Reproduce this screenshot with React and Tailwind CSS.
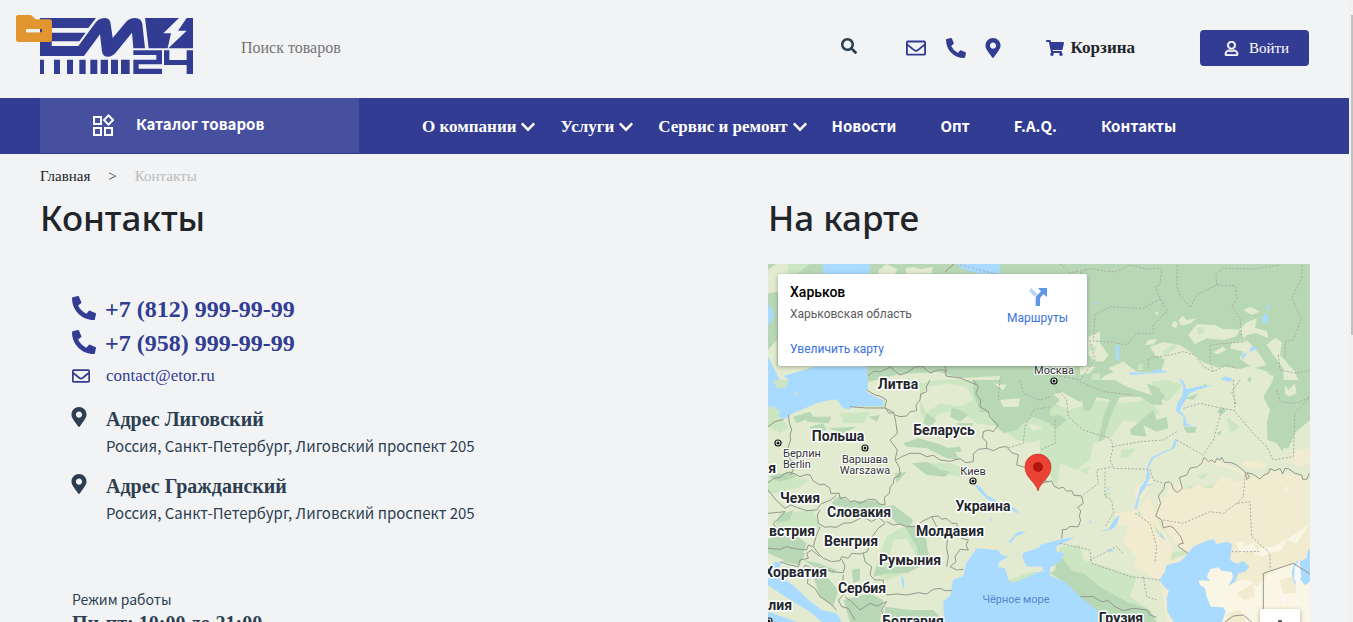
import React from "react";
import {
  FaSearch,
  FaRegEnvelope,
  FaPhoneAlt,
  FaMapMarkerAlt,
  FaShoppingCart,
  FaRegUser,
  FaChevronDown,
} from "react-icons/fa";

const SERIF = "font-['Liberation_Serif',serif]";
const SANS = "font-['Noto_Sans_CJK_SC',sans-serif]";

function Logo() {
  return (
    <svg viewBox="120 54 459 168" className="h-14 w-[153px]" fill="#323c93" aria-hidden="true">
      <path d="M120 54H288L265 84H155V98H257L238 124H155V138H235L288 66Q298 54 316 54Q330 54 332 72L338 114L378 66Q388 54 406 54Q424 54 427 72L435 145H400L396 98L347 158Q336 170 324 170Q309 170 306 155L300 103L252 168H120Z" />
      <path d="M435 54H537L490 100H513L503 145H446Z" />
      <path d="M560 54H579V145H505L560 92H534Z" />
      <path d="M400 151H486V193H416V206H486V222H400V179H469V165H400Z" />
      <path d="M492 151H508V180H560V151H579V222H560V195H492Z" />
      <path d="M120 179H132V222H120ZM162 179H180V222H162ZM201 179H219V222H201ZM238 179H257V222H238ZM271 179H292V222H271ZM302 179H324V222H302ZM333 179H354V222H333ZM363 179H389V222H363Z" />
    </svg>
  );
}

function Folder() {
  return (
    <svg viewBox="0 0 108 81" className="absolute -left-6 -top-[3px] h-[27px] w-9" aria-hidden="true">
      <path
        fill="#e1962f"
        fillRule="evenodd"
        d="M7 0H45L59 13H101Q108 13 108 20V74Q108 81 101 81H7Q0 81 0 74V7Q0 0 7 0ZM33 42Q30 42 30 45V49Q30 52 33 52H75Q78 52 78 49V45Q78 42 75 42Z"
      />
      <path fill="#f1f3f5" d="M33 42Q30 42 30 45V49Q30 52 33 52H72V42Z" />
    </svg>
  );
}

function CatalogIcon() {
  return (
    <svg viewBox="0 0 22 22" className="h-[22px] w-[22px]" fill="none" stroke="currentColor" strokeWidth="2" aria-hidden="true">
      <path d="M2 3H9V10H2ZM2 14H9V21H2ZM13 14H20V21H13ZM16.500 1.400L21 6L16.500 10.600L12 6Z" />
    </svg>
  );
}

function RouteIcon() {
  return (
    <svg viewBox="0 0 54 54" className="h-[18px] w-[18px]" aria-hidden="true">
      <path fill="#b9d2f6" d="M7 0L25 18L18 28L0 8Z" />
      <path fill="#5e97e6" d="M20 54V32Q20 26 25 21L36 10L27 0H54V27L44 18L35 28Q33 30 33 34V54Z" />
    </svg>
  );
}

const labels = [
  ["Литва", 898, 389], ["Беларусь", 944, 435], ["Польша", 838, 441], ["Чехия", 800, 503],
  ["Словакия", 859, 517], ["Украина", 983, 511], ["Молдавия", 950, 536], ["Венгрия", 851, 546],
  ["Румыния", 910, 565], ["Сербия", 862, 593], ["Болгария", 913, 626], ["Грузия", 1121, 623],
];
const cutLabels = [
  ["встрия", 815, 536], ["Хорватия", 827, 577], ["лия", 792, 610], ["я", 776, 473],
];
const cities = [
  ["Москва", 1054, 374], ["Киев", 973, 475], ["Варшава", 865, 463], ["Warszawa", 865, 474],
];
const dots = [[1054, 381], [973, 481], [865, 448], [778, 443], [769, 621]];

function MapDrawing() {
  return (
    <svg viewBox="768 264 542 420" preserveAspectRatio="xMinYMin slice" className="block h-full w-full" role="img" aria-label="Карта">
      <rect x="768" y="264" width="542" height="420" fill="#e2ebcf" />

      {/* northern forests */}
      <path fill="#b8d8b5" d="M768 264H1310V420L1296 432L1288 449L1278 445L1269 432L1271 410L1274 388L1268 372L1250 366L1230 372L1205 363L1180 350L1166 356L1160 374L1145 382L1128 378L1118 370L1104 376L1093 388L1080 402L1062 392L1044 398L1030 390L1010 404L996 396L1000 376L960 378L938 372L900 374L868 382H768Z" />
      <g transform="translate(760 190) scale(.33333)">
        <path fill="#e2ebcf" d="M24 240L48 222H84V300L24 310ZM356 240L380 222L412 238L405 252H355ZM436 235L460 230L480 238L518 230L515 250L440 252ZM24 480L50 450V528H320V560L160 575L120 600H24ZM985 440L1020 425V505L1000 490L988 470Z" />
        <path fill="#a9daff" d="M187 222H330V252H190ZM590 222H720V252L650 250L610 238ZM24 340L44 375L24 410ZM24 500L44 540L75 600H24ZM70 558L165 530H320L324 600H130Z" />
        <path fill="#cbe6c0" d="M84 222H150L110 252H84ZM440 560L480 580L525 600H470ZM720 570L780 580L820 600H760ZM1000 550H1020V600H980Z" />
      </g>
      <g transform="translate(1080 255) scale(.33333)">
        <path fill="#e2ebcf" d="M195 270L205 255L232 252L220 268ZM275 212L282 198L295 205L288 220ZM295 198L308 182L320 195L350 190L332 205L305 212ZM325 240L350 208L405 210L430 222L480 224L468 245L430 255L380 250L345 268ZM490 165L510 155L540 170L515 180ZM480 220L500 202L530 190L525 218L560 228L565 250L530 235L500 240L490 258ZM400 292L430 275L440 285L412 298ZM455 265L500 255L520 275L540 300L560 330L520 340L478 310L490 290L450 280ZM560 270L585 248L605 262L600 300L645 350L662 395L630 425L612 415L610 340L580 300ZM210 275L250 262L300 270L345 300L390 345L430 335L470 340L520 350L582 362L570 400L578 450H270L240 400L180 420L120 400L130 370L85 340L130 320L170 350L260 355L310 330L330 310L270 320L225 300ZM25 255L38 238L60 265L85 300L70 320L45 318L25 300ZM60 375L78 390L65 395ZM105 400L140 400V425L110 425ZM0 335L45 335L30 355L0 360ZM225 175L235 168L232 182Z" />
        <path fill="#cbe6c0" d="M175 330L190 325L188 345L172 346ZM215 380L260 375L310 390L265 440L230 430ZM190 420L235 450H185ZM245 290L285 265L290 275L260 300ZM25 270L50 275L45 290L25 285ZM350 220L370 215L375 232L355 240Z" />
        <path fill="#b8d8b5" d="M502 370L514 365L512 380H504ZM210 390L240 400L247 450H232ZM360 395L382 385L375 398ZM35 410L65 400L70 430L40 425Z" />
        <path fill="#a9daff" d="M107 270H117V300L119 322L108 310ZM548 185L558 172L565 192L558 207L545 202ZM556 162L574 143L567 162ZM148 352L210 354L232 342L265 352L235 354L150 360ZM484 298L502 292L488 315ZM508 292L515 274L535 280ZM422 374L435 364L460 373L450 380ZM318 402L335 400L380 392L330 412L308 450H295L312 425ZM36 143L60 142L38 148ZM295 372L306 374L315 398Z" />
      </g>

      {/* central and eastern woodland */}
      <g transform="translate(1040 380) scale(.33333)">
        <path fill="#cbe6c0" d="M0 90L40 70L90 90L180 60L240 70L330 60L360 100L310 130L250 120L215 170L160 190L150 240L110 270L60 250L50 320L0 230ZM245 210L285 205L270 230L240 235ZM120 270L150 260L140 285ZM190 340L215 335L200 360ZM560 110L600 140L570 160ZM60 500L120 495L130 540L200 560L290 590L270 650L330 690L200 700L120 650L40 575ZM390 520L440 510L445 530L380 550Z" />
        <path fill="#b8d8b5" d="M80 0H225L260 20L350 50L370 70L340 75L300 50L240 50L215 100L190 180L175 185L190 110L210 60L170 50L150 95L130 90L125 50L85 25ZM320 10L350 20L375 50L350 75ZM270 150L310 115L340 90L350 120L380 110L385 145L350 155L310 135L320 170L275 165ZM0 40L35 40L60 60L30 90L0 80ZM15 110L60 105L80 120L50 145L10 125ZM435 55L475 40L460 60ZM430 140L470 140L465 158H440ZM530 160L545 150L540 168ZM530 95L545 80L560 90L545 105ZM45 540L60 520L75 545L100 575L130 580L180 620L260 665L330 690L350 726H185L120 655L70 605L30 580L50 570Z" />
        <path fill="#b8d8b5" d="M700 0H810V50L770 110L750 160L738 175L728 215L710 190L683 180L680 130L690 90L670 50Z" />
        <path fill="#e2ebcf" d="M735 15L745 30L765 10L770 40L745 50L735 40Z" />
        <path fill="#f1ebcf" d="M760 230L775 208L810 205V250L780 262L745 245ZM605 245L660 240L680 262L640 270L610 255ZM490 238L540 245L600 270L630 295L720 270L810 300V726H380L360 600L375 550L445 520L415 500L375 445L350 405L355 350L375 310L410 330L425 295L450 270ZM225 400L290 390L330 350L360 440L400 500L390 550L360 600L330 590L280 560L290 530L250 490L265 440L225 430ZM285 320L340 295L320 340L300 360L280 350Z" />
        <path fill="#e2ebcf" d="M450 275L490 245L540 255L600 280L615 300L590 305L545 290L520 320L480 315L430 330L420 300ZM370 310L385 310L380 350L360 355Z" />
        <path fill="#cbe6c0" d="M470 285L505 280L490 298ZM480 320L520 315L515 325ZM440 315L460 318L450 330ZM340 435L355 450L372 480L350 460ZM285 400L300 395L305 408Z" />
        <path fill="#faf6e6" d="M500 570L540 560L580 580L570 615L600 600L630 600L650 620L690 575L760 550L810 580V726H550L555 690L510 680L495 640L475 605L505 600ZM590 490L615 482L605 500L640 490L650 510L600 520ZM640 520L660 505L700 500L740 475L725 510L690 520L670 530ZM740 480L810 430L770 490ZM735 325L745 318L740 332Z" />
        <path fill="#f1ebcf" d="M590 640L640 610L645 650L610 660ZM560 700L600 690L620 726H560ZM720 600L760 590L770 640L730 640Z" />
        <path fill="#a9daff" d="M445 520L460 500L500 482L520 478L530 492L560 485L576 492L570 540L592 552L610 543L628 560L615 575L595 580L585 605L565 617L580 590L575 575L545 572L535 562L510 568L500 590L510 602L475 600L480 615L495 625L500 650L512 680L550 682L557 695L545 726H402L382 695L380 655L387 632L372 620L358 600L375 575L380 555L420 545ZM0 495L30 487L62 478L107 472L72 488L48 500L50 515L74 520L60 545L35 560L10 575H0ZM0 575L38 590L75 605L120 650L170 690L185 726H0ZM430 0L440 30L470 20L520 15L465 32L440 45L420 90L435 110L440 132L465 140L430 138L430 110L408 92L412 70L428 45ZM405 177L412 180L403 205L370 220L340 235L325 265L330 290L315 325L300 345L290 388L284 385L300 325L318 300L322 260L335 232L370 215L395 205ZM182 452L205 448L225 415L240 405L230 435L215 448L190 454ZM360 455L372 472L376 480L362 470ZM198 506L225 512L210 516ZM755 580L762 552L775 540V600L765 615L760 600ZM778 545L800 535L805 505L810 515V605L795 615L778 595ZM340 312H322V318ZM205 320L208 330L200 332ZM150 420L155 430L148 428Z" />
        <path fill="#f8f9ff" d="M764 560L778 542L784 590L770 615L762 595ZM724 655L737 652L738 668L725 665Z" />
      </g>

      {/* western lands and seas */}
      <g transform="translate(760 380) scale(.33333)">
        <path fill="#cbe6c0" d="M24 80L60 85L70 120L85 140L60 160L24 140ZM240 100L330 95L310 130L250 130ZM330 50L375 60L370 85L300 80ZM480 10L540 0H870V170L810 190L770 180L720 140L650 130L600 90L540 100L500 130L480 100ZM24 300L90 290L150 300L120 320L60 340L24 340ZM500 250L570 250L630 270L600 290L520 275ZM60 400L160 390L180 440L100 480L40 450ZM340 580L360 520L380 470L430 440L480 460L520 540L480 560L380 600Z" />
        <path fill="#e2ebcf" d="M500 20L560 10L620 20L640 60L600 80L540 70L500 100L480 60ZM400 480L440 475L470 530L430 545L385 540Z" />
        <path fill="#b8d8b5" d="M640 0H870V130L820 110L790 130L770 150L730 160L700 130L690 100L660 95L640 40ZM575 85L600 90L625 105L600 125L570 110ZM590 130L640 130L625 155L600 150ZM500 100L530 120L510 140L490 130ZM430 190L475 175L530 190L580 210L600 240L560 235L500 205L440 200ZM550 205L600 200L605 215L560 220ZM455 250L500 245L540 270L570 275L555 290L500 285ZM405 280L440 275L410 310ZM100 110L150 95L160 110L110 130ZM140 110L215 110L205 130L140 125ZM150 140L190 130L200 150L155 155ZM325 110L360 105L350 125ZM205 145L290 140L250 160ZM24 290L55 282L95 275L110 290L60 305ZM220 360L240 348L270 365L350 360L370 380L400 375L460 420L450 440L410 430L380 395L310 395L250 380L215 375ZM24 480L50 440L100 460L140 490L130 520L70 540L24 520ZM60 405L100 390L90 420L50 430ZM60 500L110 515L135 520L120 555L70 545ZM435 440L470 435L500 480L505 540L480 560L470 500ZM340 590L350 560L400 565L440 550L480 560L440 580L380 580ZM130 540L175 550L230 570L220 580L160 560ZM160 590L200 590L235 630L220 680L180 650ZM275 570L300 565L300 600L280 610ZM375 680L450 690L520 690L540 710L480 726H370ZM250 660L330 640L370 660L360 726H270Z" />
        <path fill="#e2ebcf" d="M720 60L780 55L775 80L730 80ZM700 10L740 15L730 30ZM800 130L850 140L820 155Z" />
        <path fill="#a9daff" d="M24 0H325L318 35L345 50L365 58L372 78L320 78L275 80L270 88L250 85L228 58L200 62L170 70L95 102L72 118L55 108L60 92L40 80H24ZM552 726L550 665L572 645L578 600L610 588L618 550L640 520L650 505L715 510L725 525L745 530L718 548L715 560L735 565L748 605L785 590L810 578L855 575L848 560L800 560L785 540L790 518L870 492V726ZM24 560L48 545L65 550L55 565L65 590L110 625L145 660L185 690L230 700L245 726H185L150 695L100 665L60 640L24 615ZM24 695L110 726H24ZM640 310L660 320L680 345L715 365L765 385L778 402L755 390L710 371L680 356L655 330ZM745 485L775 455L800 455L765 470L752 490ZM425 580L432 600V630L425 610ZM690 410L694 420L690 425Z" />
        <path fill="#cbe6c0" d="M40 0H85L80 22L50 25ZM100 38L112 35L110 48ZM745 605L760 585L800 578L830 580L765 607Z" />
        <path fill="#e2ebcf" d="M715 560L718 545L745 530L785 528L800 560L848 560L850 572L810 576L750 600L735 565Z" />
        <path fill="#f3e6c8" d="M560 580L570 575L568 600L560 605ZM650 498L720 500L700 510Z" />
      </g>

      {/* state borders */}
      <g fill="none" stroke="#93978d" strokeWidth="3" strokeLinejoin="round" transform="translate(760 380) scale(.33333)">
        <path d="M85 105L88 128L95 150L90 165L92 180L85 200V230L94 242L92 260L100 270L90 285M24 308L42 295L60 292L75 280L90 276L105 282L120 290L138 284L150 285L160 303L180 315L192 312L210 325L212 340L238 340L240 355L258 352L270 365L285 362L300 370L325 358L345 358L358 372L375 375L373 352L388 340L390 322L400 310L402 295L420 285L418 262L405 240L412 210L390 180L412 160L408 130L402 100L385 98L375 80L380 60L360 48L345 45L320 30M270 80L320 84L375 84L402 98M24 330L50 362L75 385L92 375L110 382L140 392L170 390L182 372L212 360L230 345M180 390L172 405L175 430L195 442L210 440L230 442L250 430L275 428L310 410L335 425L355 412L375 428M24 400L75 395L62 410L40 430L60 470M405 105L420 110L440 108L450 95L470 92L468 75L480 60L482 42L500 35V18L510 0M640 0L655 20L648 40L662 60L660 80L685 95L690 112L715 135L700 155L685 150L670 155L668 175L680 185L680 205L655 208L640 222L640 245L618 248L600 236L570 244L540 240L520 226L500 230L480 220L450 220L425 230L408 240M680 205L700 212L720 202L740 200L755 218L775 225L770 255L795 262L810 270L812 290L830 310L850 302L870 305M380 425L400 435L420 432L440 440L470 440L485 425L515 410L535 408L545 418L560 415L575 430L590 430L595 452L605 475L625 480L618 495L625 510L600 508L585 530L588 545L570 560L590 570L610 568M515 410L530 440L550 450L562 480L560 505L565 530L560 560M340 465L355 445L375 430M340 465L330 490L322 515L300 522L275 520L265 535L245 530L240 542L215 545L190 535L175 520L160 500L168 470L180 440M160 500L145 495L140 510L120 508L100 505L80 500L60 508L24 505M60 545L90 555L115 560L120 540L145 535L140 520L155 510L180 530M135 555L160 568L190 562L215 575L250 578L255 558L245 538M135 555L128 575L145 590L142 610L165 625L180 650L210 670L230 690M250 585L248 610L258 625L255 640L235 660L245 680L265 685L285 720M310 520L315 545L335 560L330 585L345 600L370 600L370 620L380 645L410 642L440 645L475 638L500 642L520 628L540 625L555 632L575 632M255 650L275 665L300 690L330 670L350 678L380 665L365 690L375 726M24 140L45 125L70 118" />
      </g>
      <g fill="none" stroke="#93978d" strokeWidth="3" strokeLinejoin="round" transform="translate(1040 380) scale(.33333)">
        <path d="M0 310L35 303L42 318L55 325L70 322L80 334L95 332L102 346L125 348L130 370L113 382L122 392L118 410L122 420L115 440H88L80 448H68L65 475M445 520L415 500L418 492L430 490L422 470L402 445L390 438L370 444L365 420L347 408L362 370L355 348L372 325L375 308L388 305L395 312L400 328L412 338L427 325L418 292L440 285L450 265L472 260L485 250L492 232L505 245L515 240L525 248L530 235L540 240L545 232L553 247L575 248L590 255L615 275L620 298L628 292L620 278L640 283L660 297L672 285L685 280L690 266L705 272L720 265L728 282L735 265L745 266L765 280L785 285L788 298L800 298L808 280M670 726V580L760 550L810 582M122 650L160 650L185 665L205 662L225 680L250 692L280 685L320 690L330 705L350 712M555 726L580 708L610 705L635 726" />
      </g>
      <path fill="none" stroke="#93978d" d="M868 376L874 371L880 372L890 367L900 375L908 372L915 367L922 366L930 373L938 370L945 370L946 376L960 378L970 382L977 385M945 272L954 264M945 366L947 372" />

      {/* regional borders */}
      <g fill="none" stroke="#aaa9a5" strokeWidth="3" strokeDasharray="6 5">
        <path transform="translate(1080 255) scale(.33333)" d="M0 55L30 40L70 48L110 50L150 30L200 42L245 40L240 90L225 95L240 130L262 168L220 210V235L170 235L140 270L100 262L40 258L45 180L90 155L130 158L190 160L240 132M292 30L290 90L300 120L332 158L350 120L410 90L465 92L470 130L455 155L480 190L485 240L495 260L390 270V320L400 350L440 330L470 340M410 90L408 60L425 40L520 42L600 30M667 30L665 70L635 130L665 190L640 255L615 260V305M205 340V310L270 300L310 290L345 300L370 335L400 350M595 300L600 345L650 355L690 345M590 405L600 440L650 445L690 425M480 375L455 410L470 450M0 380L50 400L70 410L160 420" />
        <path transform="translate(1040 380) scale(.33333)" d="M30 0L80 60L85 110L130 150L210 175L220 200L210 240L220 260L170 270L175 310L130 345M215 200L300 185L370 180L410 155M410 180L490 225L520 180L545 90M430 85L480 70L545 85L580 90L640 160L680 200L700 240L760 230L765 100L810 50M580 0L585 90M220 265L330 268L340 300L370 310M195 275V350L215 360L220 400L195 440M370 420L430 430L510 395L550 400L590 370L630 365L635 470L690 520V570M615 285L610 350L590 370M285 400L330 430L350 500L345 550M60 490L150 510L155 550L270 590L360 600M150 540L230 500L250 520M310 590L320 650L350 660M575 515L660 515M45 120V190L0 210" />
        <path transform="translate(760 380) scale(.33333)" d="M780 0L790 40L840 60L870 50M870 80L820 90L795 140L790 190L740 205M720 0L715 60" />
      </g>
      <path fill="none" stroke="#aaa9a5" strokeDasharray="2 2" d="M960 265L1000 275M1060 264L1070 273L1087 269M1090 340L1095 360L1080 380L1040 372" />

      <g className="font-[Roboto,sans-serif] text-[14px] font-bold" fill="#23262d" stroke="#fff" strokeWidth="3" strokeLinejoin="round" paintOrder="stroke" textAnchor="middle">
        {labels.map(([t, x, y]) => <text key={t} x={x} y={y}>{t}</text>)}
      </g>
      <g className="font-[Roboto,sans-serif] text-[14px] font-bold" fill="#23262d" stroke="#fff" strokeWidth="3" strokeLinejoin="round" paintOrder="stroke" textAnchor="end">
        {cutLabels.map(([t, x, y]) => <text key={t} x={x} y={y}>{t}</text>)}
      </g>
      <g className="font-[Roboto,sans-serif] text-[11px]" fill="#333" stroke="#fff" strokeWidth="2" strokeLinejoin="round" paintOrder="stroke" textAnchor="middle">
        {cities.map(([t, x, y]) => <text key={t} x={x} y={y}>{t}</text>)}
        <text x="783" y="457" textAnchor="start">Берлин</text>
        <text x="783" y="468" textAnchor="start">Berlin</text>
      </g>
      <text x="1016" y="603" textAnchor="middle" fill="#5b86cc" className="font-[Roboto,sans-serif] text-[11px]">Чёрное море</text>
      {dots.map(([x, y]) => (
        <g key={`${x}-${y}`}>
          <circle cx={x} cy={y} r="3" fill="#fff" stroke="#111" strokeWidth="1.2" />
          <circle cx={x} cy={y} r="1.5" fill="#111" />
        </g>
      ))}
      <path fill="#ea4335" stroke="#c5221f" strokeWidth=".6" d="M1038 491C1036 482 1025 478 1025 467A13 13 0 0 1 1051 467C1051 478 1040 482 1038 491Z" />
      <circle cx="1038" cy="467" r="5" fill="#b31412" />
    </svg>
  );
}

function MapPanel() {
  return (
    <div className="relative mt-6 h-[420px] overflow-hidden">
      <MapDrawing />
      <div className="absolute left-[10px] top-[10px] flex h-[92px] w-[309px] justify-between rounded-xs bg-white pl-3 pr-[19px] font-[Roboto,sans-serif] text-xs shadow-[0_1px_4px_rgba(0,0,0,0.3)]">
        <div className="flex flex-col pt-2">
          <strong className="text-sm leading-5 font-medium text-black">Харьков</strong>
          <span className="mt-1 leading-4 text-[#5b5b5b]">Харьковская область</span>
          <a href="#map" className="mt-[19px] leading-4 text-[#3a72e0]">Увеличить карту</a>
        </div>
        <a href="#route" className="flex flex-col items-center gap-1 pt-[14px] leading-4 text-[#3a72e0]">
          <RouteIcon />
          Маршруты
        </a>
      </div>
      <button type="button" aria-label="Увеличить масштаб" className="absolute right-[10px] top-[345px] flex h-10 w-10 items-center justify-center rounded-xs bg-white shadow-[0_1px_4px_rgba(0,0,0,0.3)]">
        <svg viewBox="0 0 18 18" className="h-[18px] w-[18px]" stroke="#666" strokeWidth="4" aria-hidden="true"><path d="M9 0V18M0 9H18" /></svg>
      </button>
    </div>
  );
}

function Header() {
  return (
    <header className="flex h-[98px] items-center px-10 pb-[2px]">
      <a href="#home" aria-label="ЕМ 24" className="relative mb-1 shrink-0">
        <Logo />
        <Folder />
      </a>
      <form className="ml-12 flex flex-1 items-center" onSubmit={(e) => e.preventDefault()}>
        <input type="search" aria-label="Поиск товаров" placeholder="Поиск товаров" className={`${SERIF} min-w-0 flex-1 bg-transparent text-base leading-5 outline-none placeholder:text-[#757575]`} />
        <button type="submit" aria-label="Найти" className="mb-1 text-[#2c3e50]"><FaSearch size={16} /></button>
      </form>
      <div className="ml-[49px] flex items-center gap-5 text-[#323c93]">
        <a href="#mail" aria-label="Почта"><FaRegEnvelope size={20} /></a>
        <a href="#phone" aria-label="Телефон"><FaPhoneAlt size={20} /></a>
        <a href="#address" aria-label="Адрес" className="w-[15px]"><FaMapMarkerAlt size={20} className="-mx-[3px]" /></a>
      </div>
      <a href="#cart" className={`${SERIF} ml-[45px] flex items-center gap-[6px] text-[17px] font-bold text-[#212529]`}>
        <FaShoppingCart size={18} className="text-[#323c93]" />
        Корзина
      </a>
      <button type="button" className={`${SERIF} ml-[65px] flex h-9 w-[109px] items-center justify-center gap-[10px] rounded-[4px] bg-[#323c93] pl-1 text-[15px] text-white`}>
        <FaRegUser size={15} stroke="currentColor" strokeWidth={20} />
        Войти
      </button>
    </header>
  );
}

function Nav() {
  return (
    <nav className="flex h-14 items-center bg-[#323c93] pl-10 font-bold text-white">
      <button type="button" className={`${SANS} mb-px flex h-[55px] w-[319px] items-center gap-[22px] bg-[#47509e] pb-[2px] pl-[52px] text-[15px]`}>
        <CatalogIcon />
        Каталог товаров
      </button>
      <div className={`${SERIF} ml-[63px] flex items-center gap-6 pt-[2px] text-[17px]`}>
        {["О компании", "Услуги", "Сервис и ремонт"].map((t) => (
          <button key={t} type="button" className="flex items-center gap-1">
            {t}
            <FaChevronDown size={16} />
          </button>
        ))}
      </div>
      <div className={`${SANS} ml-6 flex items-center gap-11 text-[15px]`}>
        {["Новости", "Опт", "F.A.Q.", "Контакты"].map((t) => (
          <a key={t} href="#page">{t}</a>
        ))}
      </div>
    </nav>
  );
}

function Address({ title }) {
  return (
    <div className="flex h-[67px] text-[#2c3e50]">
      <FaMapMarkerAlt size={20} className="-ml-[3px] mr-[17px]" />
      <div>
        <h2 className={`${SERIF} text-xl leading-6 font-bold`}>{title}</h2>
        <p className={`${SANS} mt-[3px] text-[15px] leading-6`}>Россия, Санкт-Петербург, Лиговский проспект 205</p>
      </div>
    </div>
  );
}

const TITLE = "mt-[10px] font-['Noto_Sans',sans-serif] text-[35px] leading-[44px] font-medium text-[#212529]";

export default function App() {
  return (
    <div className="flex h-screen bg-[#f1f3f5]">
      <div className="min-w-0 flex-1 overflow-y-auto [scrollbar-width:none]">
        <Header />
        <Nav />
        <main className="pl-10 pr-[39px]">
          <div className={`${SERIF} flex gap-[18px] pt-3 text-[15px] leading-5 text-[#212529]`}>
            <a href="#home">Главная</a>
            <span>&gt;</span>
            <span className="text-[#bcbcbc]">Контакты</span>
          </div>
          <div className="flex">
            <section className="flex-1">
              <h1 className={TITLE}>Контакты</h1>
              <div className={`${SERIF} mt-[52px] ml-8 flex flex-col text-[#323c93]`}>
                {["+7 (812) 999-99-99", "+7 (958) 999-99-99"].map((t) => (
                  <a key={t} href="#phone" className="flex h-[34px] gap-[9px] text-2xl leading-[34px] font-bold">
                    <FaPhoneAlt size={24} className="mt-1" />
                    {t}
                  </a>
                ))}
                <a href="#mail" className="flex h-8 items-center gap-4 text-[17px]">
                  <FaRegEnvelope size={18} />
                  contact@etor.ru
                </a>
              </div>
              <div className="mt-[15px] ml-8">
                <Address title="Адрес Лиговский" />
                <Address title="Адрес Гражданский" />
                <p className={`${SANS} mt-[46px] text-sm leading-6 text-[#2c3e50]`}>Режим работы</p>
                <p className={`${SERIF} text-xl leading-6 font-bold text-[#2c3e50]`}>Пн-пт: 10:00 до 21:00</p>
              </div>
            </section>
            <section className="w-[542px]">
              <h1 className={TITLE}>На карте</h1>
              <MapPanel />
            </section>
          </div>
        </main>
      </div>
      <div className="w-1 bg-[#f1f1f1] pt-[15px] pl-[2px]" aria-hidden="true">
        <div className="h-80 bg-[#c1c1c1]" />
      </div>
    </div>
  );
}
